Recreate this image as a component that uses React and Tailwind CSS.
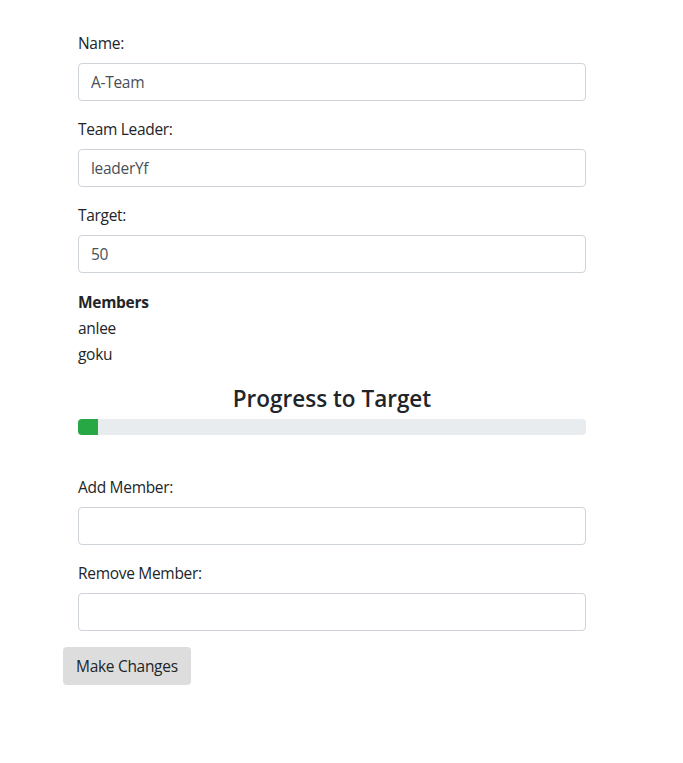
export default function App() {
  const members = ["anlee", "goku"];
  const fields = [
    { label: "Name:", value: "A-Team" },
    { label: "Team Leader:", value: "leaderYf" },
    { label: "Target:", value: "50" },
  ];

  return (
    <div
      className="w-[683px] min-h-[763px] bg-white text-[#212529] text-[15.5px] tracking-[-0.3px] leading-6"
      style={{ fontFamily: '"Open Sans", "Noto Sans", sans-serif' }}
    >
      <div className="pt-[31px] pl-[63px] w-[586px]">
        <div className="pl-[15px]">
          {fields.map((f) => (
            <div key={f.label} className="mb-4">
              <label className="block mb-2">{f.label}</label>
              <input
                defaultValue={f.value}
                className="block w-full h-[38px] px-3 border border-[#ced4da] rounded text-[#495057] outline-none"
              />
            </div>
          ))}

          <div className="leading-[26px]">
            <div className="font-bold">Members</div>
            {members.map((m) => (
              <div key={m}>{m}</div>
            ))}
          </div>

          <h4 className="text-center text-[22.5px] font-semibold tracking-normal leading-[29px] mt-[17px] mb-[6px]">
            Progress to Target
          </h4>
          <div className="h-4 bg-[#e9ecef] rounded overflow-hidden flex">
            <div className="bg-[#28a745] w-[20px] h-full" />
          </div>

          <div className="mt-10">
            <div className="mb-4">
              <label className="block mb-2">Add Member:</label>
              <input className="block w-full h-[38px] px-3 border border-[#ced4da] rounded outline-none" />
            </div>
            <div className="mb-4">
              <label className="block mb-2">Remove Member:</label>
              <input className="block w-full h-[38px] px-3 border border-[#ced4da] rounded outline-none" />
            </div>
          </div>
        </div>

        <button className="h-[38px] px-[13px] bg-[#dddddd] rounded text-[#212529]">
          Make Changes
        </button>
      </div>
    </div>
  );
}
